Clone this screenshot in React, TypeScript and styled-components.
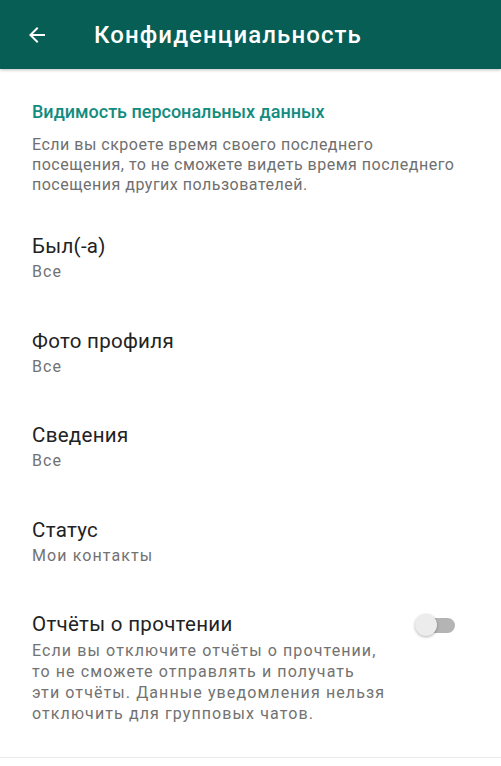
import React, { useState } from 'react';
import styled, { createGlobalStyle } from 'styled-components';

const GlobalStyle = createGlobalStyle`
  html, body {
    margin: 0;
    padding: 0;
    background: #ffffff;
    font-family: Roboto, "Noto Sans", Arial, sans-serif;
  }
`;

const Page = styled.div`
  width: 501px;
  min-height: 766px;
  background: #ffffff;
  display: flex;
  flex-direction: column;
`;

const Toolbar = styled.header`
  height: 69px;
  background: #075e54;
  display: flex;
  align-items: center;
  padding-left: 24px;
  gap: 44px;
  box-shadow: 0 1px 3px rgba(0, 0, 0, 0.25);
`;

const BackButton = styled.button`
  width: 26px;
  height: 26px;
  padding: 0;
  border: none;
  background: transparent;
  display: flex;
  align-items: center;
  justify-content: center;
`;

const Title = styled.h1`
  margin: 0;
  color: #ffffff;
  font-size: 24px;
  font-weight: 500;
  letter-spacing: 1.1px;
`;

const Section = styled.section`
  padding: 32px 32px 0 32px;
`;

const SectionTitle = styled.div`
  color: #128c7e;
  font-size: 18px;
  font-weight: 500;
  line-height: 22px;
`;

const SectionNote = styled.p`
  margin: 12px 0 0 0;
  color: #6f6f6f;
  font-size: 16px;
  line-height: 20px;
  letter-spacing: 0.5px;
`;

const List = styled.div`
  display: flex;
  flex-direction: column;
  padding-top: 38px;
`;

const Row = styled.div`
  display: flex;
  align-items: flex-start;
  justify-content: space-between;
  padding: 0 32px;
  height: 94.5px;
`;

const RowText = styled.div`
  display: flex;
  flex-direction: column;
`;

const RowTitle = styled.div`
  color: #222222;
  font-size: 20.5px;
  line-height: 27px;
  letter-spacing: 0.3px;
`;

const RowValue = styled.div`
  color: #727272;
  font-size: 16px;
  line-height: 24px;
  letter-spacing: 1.1px;
`;

const ToggleRow = styled(Row)`
  height: auto;
  padding-bottom: 33px;
  border-bottom: 1px solid #ececec;
`;

const RowDescription = styled.div`
  margin-top: 2px;
  color: #727272;
  font-size: 16px;
  line-height: 21px;
  letter-spacing: 1.1px;
  width: 370px;
`;

const Track = styled.button<{ $on: boolean }>`
  position: relative;
  width: 36px;
  height: 15px;
  margin: 7px 14px 0 0;
  padding: 0;
  border: none;
  border-radius: 8px;
  background: ${p => (p.$on ? '#7fc6bd' : '#b4b4b4')};
  flex-shrink: 0;
`;

const Thumb = styled.span<{ $on: boolean }>`
  position: absolute;
  top: -4px;
  left: ${p => (p.$on ? '14px' : '-4px')};
  width: 22px;
  height: 22px;
  border-radius: 50%;
  background: ${p => (p.$on ? '#128c7e' : '#ececec')};
  box-shadow: 0 1px 3px rgba(0, 0, 0, 0.3);
`;

const items = [
  { title: 'Был(-а)', value: 'Все' },
  { title: 'Фото профиля', value: 'Все' },
  { title: 'Сведения', value: 'Все' },
  { title: 'Статус', value: 'Мои контакты' },
];

export default function App() {
  const [receipts, setReceipts] = useState(false);

  return (
    <Page>
      <GlobalStyle />
      <Toolbar>
        <BackButton aria-label="Назад">
          <svg width="24" height="24" viewBox="0 0 24 24">
            <path
              d="M20 11H7.83l5.59-5.59L12 4l-8 8 8 8 1.41-1.41L7.83 13H20v-2z"
              fill="#ffffff"
            />
          </svg>
        </BackButton>
        <Title>Конфиденциальность</Title>
      </Toolbar>

      <Section>
        <SectionTitle>Видимость персональных данных</SectionTitle>
        <SectionNote>
          Если вы скроете время своего последнего
          <br />
          посещения, то не сможете видеть время последнего
          <br />
          посещения других пользователей.
        </SectionNote>
      </Section>

      <List>
        {items.map(item => (
          <Row key={item.title}>
            <RowText>
              <RowTitle>{item.title}</RowTitle>
              <RowValue>{item.value}</RowValue>
            </RowText>
          </Row>
        ))}
        <ToggleRow>
          <RowText>
            <RowTitle>Отчёты о прочтении</RowTitle>
            <RowDescription>
              Если вы отключите отчёты о прочтении,
              <br />
              то не сможете отправлять и получать
              <br />
              эти отчёты. Данные уведомления нельзя
              <br />
              отключить для групповых чатов.
            </RowDescription>
          </RowText>
          <Track $on={receipts} onClick={() => setReceipts(!receipts)}>
            <Thumb $on={receipts} />
          </Track>
        </ToggleRow>
      </List>
    </Page>
  );
}
